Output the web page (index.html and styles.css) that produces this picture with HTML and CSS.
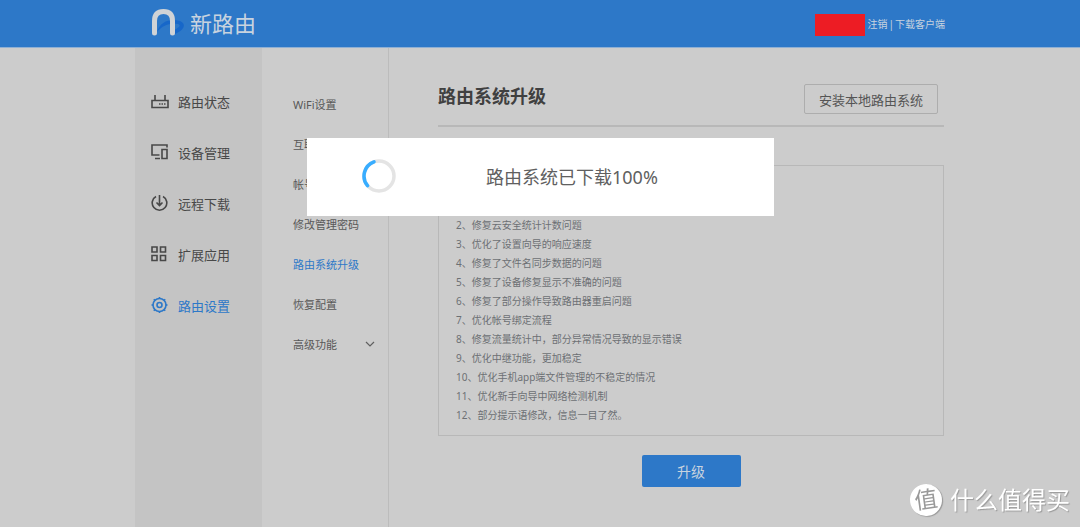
FILE: index.html
```html
<!DOCTYPE html>
<html lang="zh-CN">
<head>
<meta charset="utf-8">
<title>路由系统升级</title>
<link rel="stylesheet" href="styles.css">
</head>
<body>
<header class="topbar">
  <div class="topbar-inner">
    <a class="brand" href="#">
      <svg class="brand-mark" viewBox="0 0 35 30" aria-hidden="true">
        <path d="M6 24C9 13 20 10 29 13C36 16 33 22 24 26L23 22C29 19 30 17 27 16C18 15 12 17 6 24Z" fill="#1767c9"/>
        <path d="M3.500 25V13C3.500 6.500 7 3.500 12.500 3.500s9 3 9 9.500v12" fill="none" stroke="#d0d3d6" stroke-width="5" stroke-linecap="round"/>
      </svg>
      <span class="brand-name">新路由</span>
    </a>
    <div class="account">
      <span class="account-mask"></span>
      <a href="#">注销</a><span>|</span><a href="#">下载客户端</a>
    </div>
  </div>
</header>

<div class="layout">
  <nav class="sidebar">
    <a class="side-link" href="#">
      <svg class="side-icon" viewBox="0 0 18 18"><path d="M1 8.500h16v7H1zM4 8V3M14 8V3"/><path d="M8 12h1.500M10.500 12H12M13 12h1.500"/></svg>路由状态</a>
    <a class="side-link" href="#">
      <svg class="side-icon" viewBox="0 0 18 18"><path d="M8.500 12H1V2h15v2.500M4 15.500h5M11 6.500h5v9h-5z"/></svg>设备管理</a>
    <a class="side-link" href="#">
      <svg class="side-icon" viewBox="0 0 18 18"><path d="M5 2.500A7.300 7.300 0 1 0 12 2.500M8.500 1v10.500M5.500 8.500l3 3 3-3"/></svg>远程下载</a>
    <a class="side-link" href="#">
      <svg class="side-icon" viewBox="0 0 18 18"><path d="M1 2h5v5H1zM9.500 2h5v5h-5zM1 10.500h5v5H1zM9.500 10.500h5v5h-5z"/></svg>扩展应用</a>
    <a class="side-link active" href="#">
      <svg class="side-icon" viewBox="0 0 18 18"><circle cx="8.500" cy="9" r="6.500"/><circle cx="8.500" cy="9" r="2.500"/><path d="M8.500 1v2M8.500 15v2M.5 9h2M14.500 9h2M2.800 3.300l1.200 1.200M13 13.500l1.200 1.200M14.200 3.300L13 4.500M4 13.500l-1.200 1.200"/></svg>路由设置</a>
  </nav>

  <nav class="subnav">
    <a class="sub-link" href="#">WiFi设置</a>
    <a class="sub-link" href="#">互联</a>
    <a class="sub-link" href="#">帐号</a>
    <a class="sub-link" href="#">修改管理密码</a>
    <a class="sub-link active" href="#">路由系统升级</a>
    <a class="sub-link" href="#">恢复配置</a>
    <a class="sub-link" href="#">高级功能
      <svg class="chevron" viewBox="0 0 10 6"><path d="M1 1l4 4 4-4"/></svg></a>
  </nav>

  <main class="content">
    <div class="content-head">
      <h1>路由系统升级</h1>
      <button class="local-button" type="button">安装本地路由系统</button>
    </div>
    <ul class="changelog">
      <li>2、修复云安全统计计数问题</li>
      <li>3、优化了设置向导的响应速度</li>
      <li>4、修复了文件名同步数据的问题</li>
      <li>5、修复了设备修复显示不准确的问题</li>
      <li>6、修复了部分操作导致路由器重启问题</li>
      <li>7、优化帐号绑定流程</li>
      <li>8、修复流量统计中，部分异常情况导致的显示错误</li>
      <li>9、优化中继功能，更加稳定</li>
      <li>10、优化手机app端文件管理的不稳定的情况</li>
      <li>11、优化新手向导中网络检测机制</li>
      <li>12、部分提示语修改，信息一目了然。</li>
    </ul>
    <button class="upgrade-button" type="button">升级</button>
  </main>
</div>

<div class="dialog" role="dialog" aria-labelledby="dialog-text">
  <svg class="spinner" viewBox="0 0 34 34" aria-hidden="true">
    <circle cx="17" cy="17" r="15" fill="none" stroke="#e4e4e4" stroke-width="3.500"/>
    <path d="M12 2.900A15 15 0 0 0 5.500 26.600" fill="none" stroke="#38adff" stroke-width="3.500" stroke-linecap="round"/>
  </svg>
  <p id="dialog-text" class="dialog-text">路由系统已下载100%</p>
</div>

<div class="watermark">
  <span class="watermark-badge">值</span>
  <span>什么值得买</span>
</div>
</body>
</html>
```
FILE: styles.css
```css
* { box-sizing: border-box; }

body {
  margin: 0;
  min-height: 100vh;
  display: flex;
  flex-direction: column;
  background: #ccc;
  color: #484848;
  font-family: "Noto Sans", "Noto Sans CJK SC", sans-serif;
  font-size: 13px;
}

a { color: inherit; text-decoration: none; }
button { font-family: inherit; cursor: pointer; }

.topbar {
  background: #2d78c8;
  border-bottom: 1px solid #8fb0d4;
}

.topbar-inner {
  display: flex;
  align-items: center;
  justify-content: space-between;
  width: 75%;
  height: 47px;
  margin: 0 auto;
  padding-left: 16px;
}

.brand { display: flex; align-items: center; gap: 4px; padding-bottom: 2px; }
.brand-mark { width: 35px; height: 30px; }

.brand-name {
  color: #c8d3df;
  font-size: 22px;
  line-height: 30px;
}

.account {
  display: flex;
  align-items: center;
  gap: 1px;
  color: #c8d3df;
  font-size: 10px;
}

.account-mask {
  width: 50px;
  height: 22px;
  margin: 2px 1px 0 0;
  background: #ed1c24;
}

.layout {
  flex: 1;
  display: flex;
  width: 75%;
  margin: 0 auto;
  border-left: 1px solid #c4c4c4;
}

.sidebar {
  flex: 0 0 126px;
  padding-top: 28px;
  background: #c4c4c4;
}

.side-link {
  display: flex;
  align-items: center;
  gap: 9px;
  height: 51px;
  padding-left: 15px;
}

.side-icon {
  width: 18px;
  height: 18px;
  margin-bottom: 2px;
  fill: none;
  stroke: currentColor;
  stroke-width: 1.6;
}

.active { color: #2d78c8; }

.subnav {
  flex: 0 0 127px;
  padding-top: 36px;
  border-right: 1px solid #bcbcbc;
  color: #585858;
  font-size: 11px;
}

.sub-link {
  display: flex;
  align-items: center;
  justify-content: space-between;
  height: 40px;
  padding: 0 13px 0 31px;
}

.sub-link.active { color: #2d78c8; }

.chevron {
  width: 10px;
  height: 6px;
  fill: none;
  stroke: #606060;
  stroke-width: 1.2;
}

.content {
  flex: 1;
  display: flex;
  flex-direction: column;
  padding: 36px 1px 0 49px;
}

.content-head {
  display: flex;
  align-items: flex-start;
  justify-content: space-between;
  padding: 0 6px 11px 0;
  border-bottom: 2px solid #b8b8b8;
}

h1 {
  margin: 0;
  color: #404040;
  font-size: 18px;
  line-height: 24px;
}

.local-button {
  height: 30px;
  padding: 0 14px;
  border: 1px solid #adadad;
  border-radius: 2px;
  background: transparent;
  color: #555;
  font-size: 13px;
}

.changelog {
  margin: 38px 0 19px;
  padding: 50px 17px 10px;
  border: 1px solid #b8b8b8;
  list-style: none;
  color: #6c7074;
  font-size: 10px;
  line-height: 19px;
}

.upgrade-button {
  align-self: center;
  width: 99px;
  height: 32px;
  border: 0;
  border-radius: 2px;
  background: #2d78c8;
  color: #c8d3df;
  font-size: 14px;
}

.dialog {
  position: fixed;
  top: 138px;
  left: 50%;
  display: flex;
  align-items: center;
  gap: 90px;
  width: 467px;
  height: 78px;
  margin-left: -233px;
  padding: 0 0 3px 55px;
  background: #fff;
}

.spinner { width: 34px; height: 34px; }

.dialog-text {
  margin: 0;
  color: #606060;
  font-size: 18px;
}

.watermark {
  position: fixed;
  right: 10px;
  bottom: 10px;
  display: flex;
  align-items: center;
  gap: 8px;
  color: #fff;
  font-size: 24px;
  line-height: 34px;
  text-shadow: 1px 1px 1px #999;
}

.watermark-badge {
  width: 32px;
  height: 32px;
  border-radius: 50%;
  background: #fff;
  box-shadow: 1px 1px 1px #999;
  color: #999;
  font-size: 23px;
  line-height: 30px;
  text-align: center;
  text-shadow: none;
  rotate: -8deg;
}
```
